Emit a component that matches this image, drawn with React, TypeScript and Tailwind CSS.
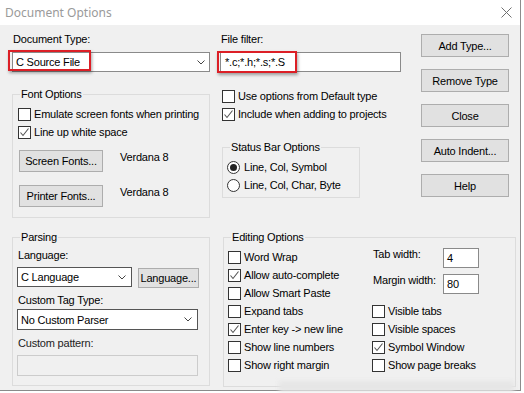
import React from "react";

// small chevron used by the combo boxes
function Chevron() {
  return (
    <svg width="8" height="5" viewBox="0 0 8 5" className="shrink-0">
      <polyline points="0.5,0.5 4,4 7.5,0.5" fill="none" stroke="#444" strokeWidth="1" />
    </svg>
  );
}

function Check({ checked, label }: { checked?: boolean; label: string }) {
  return (
    <div className="flex h-[18px] items-center gap-[3px] whitespace-nowrap">
      <div className="flex h-[13px] w-[13px] shrink-0 items-center justify-center border border-[#333] bg-white">
        {checked && (
          <svg width="11" height="11" viewBox="0 0 11 11">
            <polyline points="1.5,5.5 4,8.5 9.5,1.5" fill="none" stroke="#555" strokeWidth="1.1" />
          </svg>
        )}
      </div>
      <span>{label}</span>
    </div>
  );
}

function Radio({ selected, label }: { selected?: boolean; label: string }) {
  return (
    <div className="flex h-[18px] items-center gap-[4px] whitespace-nowrap">
      <div className="flex h-[13px] w-[13px] shrink-0 items-center justify-center rounded-full border border-[#333] bg-white">
        {selected && <div className="h-[7px] w-[7px] rounded-full bg-[#222]" />}
      </div>
      <span>{label}</span>
    </div>
  );
}

function Button({ children, className = "" }: { children: React.ReactNode; className?: string }) {
  return (
    <div
      className={
        "flex items-center justify-center border border-[#adadad] bg-[#e1e1e1] whitespace-nowrap " + className
      }
    >
      {children}
    </div>
  );
}

function Group({ title, className = "", children }: { title: string; className?: string; children: React.ReactNode }) {
  return (
    <fieldset className={"relative border border-[#dcdcdc] " + className}>
      <legend className="ml-[7px] px-[1px] leading-[14px]">{title}</legend>
      {children}
    </fieldset>
  );
}

export default function App() {
  return (
    <div className="h-[393px] w-[524px] overflow-hidden bg-white font-['Liberation_Sans',Arial,sans-serif] text-[11px] leading-[14px] tracking-[-0.2px] text-black">
      <div className="w-[521px] border-r border-[#8c8c8c]">
        {/* Title bar */}
        <div className="flex h-[25px] items-center justify-between bg-white pl-[5px] pr-[8px]">
          <span className="font-['Noto_Sans',sans-serif] text-[12px] tracking-normal text-[#9a9a9a]">Document Options</span>
          <svg width="11" height="11" viewBox="0 0 11 11">
            <line x1="0.5" y1="0.5" x2="10.5" y2="10.5" stroke="#707070" strokeWidth="1" />
            <line x1="10.5" y1="0.5" x2="0.5" y2="10.5" stroke="#707070" strokeWidth="1" />
          </svg>
        </div>

        {/* Dialog body */}
        <div className="h-[366px] border-b border-[#8a8a8a] bg-[#f0f0f0]">
          {/* Top section */}
          <div className="flex items-start pl-[12px] pt-[7px]">
            {/* Left column */}
            <div className="w-[198px]">
              <div className="pl-[1px]">Document Type:</div>
              <div className="relative mt-[6px] flex h-[20px] items-center justify-between border border-[#8a8a8a] bg-white pl-[3px] pr-[4px]">
                <span>C Source File</span>
                <Chevron />
                <div className="absolute left-[-5px] top-[-3px] h-[21px] w-[83px] border-2 border-[#dc1f26] shadow-[1px_2px_3px_rgba(0,0,0,0.35)]" />
              </div>

              <Group title="Font Options" className="mt-[15px]">
                <div className="pl-[5px] pb-[10px] pt-[4px]">
                  <Check label="Emulate screen fonts when printing" />
                  <Check checked label="Line up white space" />
                  <div className="mt-[9px] flex items-start">
                    <Button className="ml-[1px] h-[22px] w-[84px]">Screen Fonts...</Button>
                    <span className="ml-[17px]">Verdana 8</span>
                  </div>
                  <div className="mt-[13px] flex items-start">
                    <Button className="ml-[1px] h-[22px] w-[84px]">Printer Fonts...</Button>
                    <span className="ml-[17px]">Verdana 8</span>
                  </div>
                </div>
              </Group>
            </div>

            {/* Middle column */}
            <div className="ml-[10px] w-[181px]">
              <div className="pl-[1px]">File filter:</div>
              <div className="relative mt-[6px] flex h-[20px] items-center border border-[#8a8a8a] bg-white pl-[4px]">
                <span>*.c;*.h;*.s;*.S</span>
                <div className="absolute left-[-4px] top-[-2px] h-[22px] w-[80px] border-2 border-[#dc1f26] shadow-[1px_2px_3px_rgba(0,0,0,0.35)]" />
              </div>
              <div className="mt-[15px] pl-[2px]">
                <Check label="Use options from Default type" />
                <Check checked label="Include when adding to projects" />
              </div>
              <Group title="Status Bar Options" className="ml-[2px] mt-[17px] w-[138px]">
                <div className="pl-[4px] pb-[3px] pt-[4px]">
                  <Radio selected label="Line, Col, Symbol" />
                  <Radio label="Line, Col, Char, Byte" />
                </div>
              </Group>
            </div>

            {/* Button column */}
            <div className="ml-[20px] mt-[2px] flex w-[88px] flex-col gap-[12px]">
              <Button className="h-[23px]">Add Type...</Button>
              <Button className="h-[23px]">Remove Type</Button>
              <Button className="h-[23px]">Close</Button>
              <Button className="h-[23px]">Auto Indent...</Button>
              <Button className="h-[23px]">Help</Button>
            </div>
          </div>

          {/* Bottom section */}
          <div className="mt-[12px] flex items-start pl-[12px]">
            <Group title="Parsing" className="w-[198px]">
              <div className="pl-[4px] pb-[9px] pt-[4px]">
                <div className="pl-[1px]">Language:</div>
                <div className="mt-[5px] flex items-start">
                  <div className="flex h-[20px] w-[115px] items-center justify-between border border-[#555] bg-white pl-[3px] pr-[5px]">
                    <span>C Language</span>
                    <Chevron />
                  </div>
                  <Button className="ml-[6px] mt-[1px] h-[20px] w-[61px] border-[#555]">Language...</Button>
                </div>
                <div className="mt-[5px] pl-[1px]">Custom Tag Type:</div>
                <div className="mt-[2px] flex h-[21px] w-[181px] items-center justify-between border border-[#555] bg-white pl-[3px] pr-[5px]">
                  <span>No Custom Parser</span>
                  <Chevron />
                </div>
                <div className="mt-[6px] pl-[1px] text-[#222]">Custom pattern:</div>
                <div className="mt-[5px] h-[21px] w-[181px] border border-[#cccccc] bg-[#f0f0f0]" />
              </div>
            </Group>

            <Group title="Editing Options" className="ml-[13px] w-[293px]">
              <div className="flex pl-[4px] pb-[12px] pt-[4px]">
                <div className="w-[144px]">
                  <Check label="Word Wrap" />
                  <Check checked label="Allow auto-complete" />
                  <Check label="Allow Smart Paste" />
                  <Check label="Expand tabs" />
                  <Check checked label="Enter key -> new line" />
                  <Check label="Show line numbers" />
                  <Check label="Show right margin" />
                </div>
                <div>
                  <div className="flex h-[20px] items-start">
                    <span className="mt-[-1px] w-[71px] pl-[1px]">Tab width:</span>
                    <div className="flex h-[20px] w-[36px] items-center border border-[#8a8a8a] bg-white pl-[3px]">4</div>
                  </div>
                  <div className="mt-[6px] flex h-[20px] items-start">
                    <span className="mt-[-1px] w-[71px] pl-[1px]">Margin width:</span>
                    <div className="flex h-[20px] w-[36px] items-center border border-[#8a8a8a] bg-white pl-[3px]">80</div>
                  </div>
                  <div className="mt-[8px]">
                    <Check label="Visible tabs" />
                    <Check label="Visible spaces" />
                    <Check checked label="Symbol Window" />
                    <Check label="Show page breaks" />
                  </div>
                </div>
              </div>
              {/* smudge over the lower edge of the screenshot */}
              <div className="absolute left-[55px] top-[137px] h-[11px] w-[235px] bg-[#e6e6e6] blur-[2px]" />
            </Group>
          </div>
        </div>
      </div>
    </div>
  );
}
